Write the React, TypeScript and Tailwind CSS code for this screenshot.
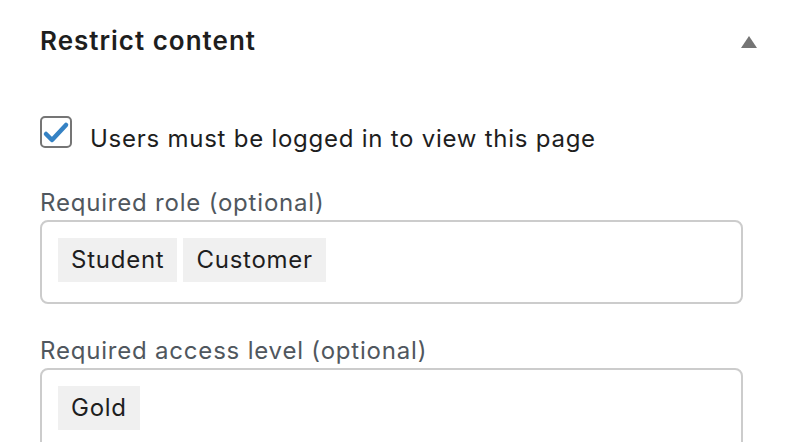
import React from "react";

function Tag({ label }: { label: string }) {
  return (
    <span className="inline-flex items-center h-[44px] px-[13px] bg-[#f0f0f0] text-[24px] leading-[32px] tracking-[0.75px] text-[#1e1e1e] mr-[6px] mb-[4px]">
      {label}
    </span>
  );
}

function Field({ label, tags, mt }: { label: string; tags: string[]; mt: string }) {
  return (
    <div className={mt}>
      <div className="text-[24px] leading-[32px] tracking-[0.8px] text-[#50575e] mb-[1px]">{label}</div>
      <div className="border-2 border-[#cccccc] rounded-[8px] pt-[16px] pb-[16px] px-[16px] flex flex-wrap">
        {tags.map((t) => (
          <Tag key={t} label={t} />
        ))}
      </div>
    </div>
  );
}

export default function App() {
  return (
    <div
      className="w-[786px] h-[442px] overflow-hidden bg-white"
      style={{ fontFamily: "Inter, 'Noto Sans', sans-serif" }}
    >
      <div className="flex items-center justify-between pl-[40px] pr-[29px] pt-[25px]">
        <h2 className="text-[26px] leading-[32px] font-semibold text-[#1e1e1e] tracking-[1px]">
          Restrict content
        </h2>
        <svg width="16" height="12" viewBox="0 0 16 12" className="mt-[2px]">
          <polygon points="8,0 16,12 0,12" fill="#757575" />
        </svg>
      </div>
      <div className="pl-[40px] pr-[43px]">
        <label className="flex items-start mt-[59px] h-[32px]">
          <span className="w-[32px] h-[32px] border-2 border-[#757575] rounded-[5px] flex items-center justify-center shrink-0">
            <svg width="28" height="28" viewBox="0 0 28 28">
              <polyline
                points="4,16 10,22 24,7"
                fill="none"
                stroke="#3582c4"
                strokeWidth="4.5"
                strokeLinecap="round"
                strokeLinejoin="round"
              />
            </svg>
          </span>
          <span className="ml-[18px] mt-[7px] text-[24px] leading-[32px] tracking-[0.75px] text-[#1e1e1e] whitespace-nowrap">
            Users must be logged in to view this page
          </span>
        </label>
        <Field label="Required role (optional)" tags={["Student", "Customer"]} mt="mt-[39px]" />
        <Field label="Required access level (optional)" tags={["Gold"]} mt="mt-[31px]" />
      </div>
    </div>
  );
}
